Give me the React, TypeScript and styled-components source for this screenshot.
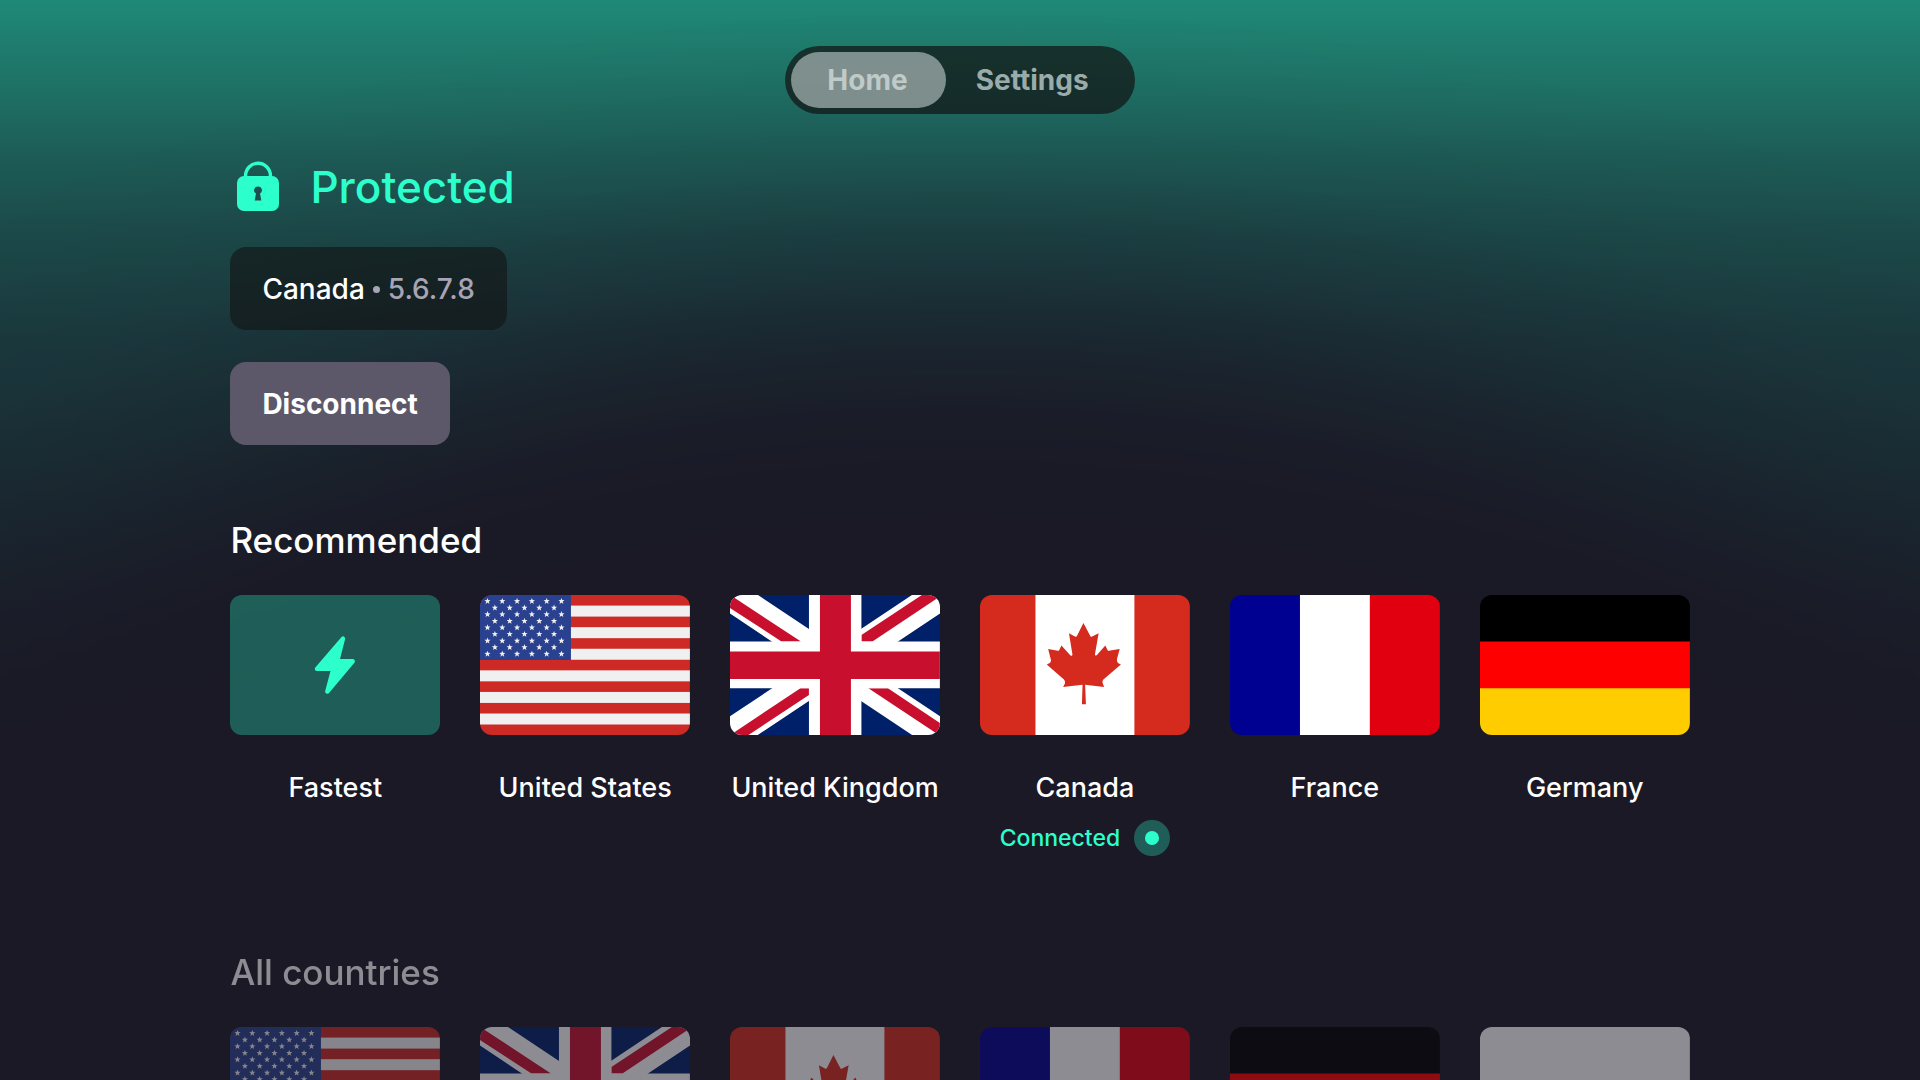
import React from "react";
import styled, { createGlobalStyle } from "styled-components";

const mint = "#2cffcc";
const ink = "#1b1926";

const GlobalStyle = createGlobalStyle`
  *, *::before, *::after { box-sizing: border-box; }
  html { scrollbar-width: none; background: ${ink}; }
  body {
    margin: 0;
    color: #fff;
    font-family: Inter, "Liberation Sans", sans-serif;
    font-size: 28px;
    line-height: 36px;
    font-weight: 500;
  }
  button { font: inherit; color: inherit; border: 0; padding: 0; background: none; cursor: pointer; }
  h1, h2, p, ul { margin: 0; padding: 0; font-weight: 500; }
`;

const Screen = styled.div`
  position: relative;
  isolation: isolate;
  &::before {
    content: "";
    position: absolute;
    inset: 0 0 auto;
    height: 100vh;
    z-index: -1;
    background: linear-gradient(
      to bottom,
      rgba(36, 255, 204, 0.49) 0%,
      rgba(36, 255, 204, 0.345) 11%,
      rgba(34, 255, 204, 0.285) 15%,
      rgba(30, 255, 204, 0.21) 22%,
      rgba(24, 255, 204, 0.15) 31%,
      rgba(10, 255, 204, 0.09) 45%,
      rgba(0, 255, 204, 0.045) 56%,
      rgba(0, 255, 204, 0) 70%
    );
    mask-image: radial-gradient(
      ellipse 86% 100% at 50% 100%,
      transparent 50%,
      rgba(0, 0, 0, 0.16) 62%,
      rgba(0, 0, 0, 0.34) 67%,
      rgba(0, 0, 0, 0.69) 76%,
      rgba(0, 0, 0, 0.9) 85%,
      rgba(0, 0, 0, 0.95) 90%,
      #000 100%
    );
  }
`;

const Main = styled.main`
  padding: 46px 12% 0;
`;

const Tabs = styled.nav`
  display: flex;
  width: fit-content;
  margin: 0 auto;
  padding: 6px;
  border-radius: 34px;
  background: rgba(19, 19, 19, 0.7);
`;

const Tab = styled.button<{ $active?: boolean }>`
  height: 56px;
  padding: 0 ${(p) => (p.$active ? 38 : 40)}px 0 ${(p) => (p.$active ? 36 : 30)}px;
  border-radius: 28px;
  font-weight: 700;
  color: ${(p) => (p.$active ? "#bfcac9" : "#9aacaa")};
  background: ${(p) => (p.$active ? "rgba(230, 240, 240, 0.5)" : "transparent")};
`;

const Status = styled.h1`
  display: flex;
  align-items: center;
  gap: 24px;
  margin-top: 40px;
  font-size: 44px;
  line-height: 66px;
  color: ${mint};
`;

const LockIcon = styled.svg`
  width: 56px;
  height: 56px;
`;

const Panel = styled.p`
  display: flex;
  align-items: center;
  gap: 8px;
  width: fit-content;
  margin-top: 27px;
  padding: 24px 32px 23px;
  border-radius: 16px;
  background: rgba(19, 19, 19, 0.6);
`;

const Address = styled.span`
  color: #a7a4b5;
`;

const Dot = styled.span`
  width: 7px;
  height: 7px;
  border-radius: 50%;
  background: #a7a4b5;
`;

const Disconnect = styled.button`
  display: block;
  height: 83px;
  margin-top: 32px;
  padding: 0 32px;
  border-radius: 16px;
  font-weight: 700;
  background: #5c586a;
`;

const Section = styled.section<{ $dimmed?: boolean }>`
  margin-top: ${(p) => (p.$dimmed ? 92 : 71)}px;
  opacity: ${(p) => (p.$dimmed ? 0.5 : 1)};
`;

const SectionTitle = styled.h2`
  font-size: 35px;
  line-height: 48px;
`;

const Grid = styled.ul`
  display: grid;
  grid-template-columns: repeat(6, minmax(0, 1fr));
  gap: 40px;
  margin-top: 31px;
  list-style: none;
`;

const Card = styled.button`
  display: flex;
  flex-direction: column;
  align-items: center;
  width: 100%;
  white-space: nowrap;
`;

const Thumb = styled.span<{ $tinted?: boolean }>`
  display: grid;
  place-items: center;
  width: 100%;
  aspect-ratio: 3 / 2;
  border-radius: 12px;
  overflow: hidden;
  background: ${(p) => (p.$tinted ? "rgba(44, 255, 204, 0.3)" : "transparent")};
`;

const FlagArt = styled.svg`
  display: block;
  width: 100%;
  height: 100%;
`;

const BoltIcon = styled.svg`
  width: 42px;
  height: 58px;
`;

const Name = styled.span`
  margin-top: 35px;
  font-size: 27px;
`;

const Connected = styled.span`
  display: flex;
  align-items: center;
  gap: 14px;
  height: 36px;
  margin-top: 14px;
  font-size: 23px;
  color: ${mint};
`;

const Pulse = styled.span`
  width: 36px;
  height: 36px;
  border-radius: 50%;
  border: 11px solid #215d58;
  background: ${mint};
`;

const StarField = () => {
  const stars: React.ReactElement[] = [];
  for (let row = 0; row < 9; row++) {
    const count = row % 2 ? 5 : 6;
    for (let col = 0; col < count; col++) {
      const x = 7.5 + col * 14.8 + (row % 2 ? 7.4 : 0);
      const y = 6.2 + row * 6.6;
      stars.push(
        <path
          key={`${row}-${col}`}
          transform={`translate(${x} ${y})`}
          d="M0-3.3 .8-1.1 3.1-1 1.3.4 1.9 2.7 0 1.4-1.9 2.7-1.3.4-3.1-1-.8-1.1Z"
          fill="#f0f0f0"
        />
      );
    }
  }
  return <>{stars}</>;
};

const UnitedStates = () => (
  <FlagArt viewBox="0 0 210 140" preserveAspectRatio="none" aria-hidden="true">
    <path fill="#cd2a26" d="M0 0h210v140H0z" />
    {[0, 1, 2, 3, 4, 5].map((i) => (
      <rect key={i} y={10.6 + i * 21.6} width="210" height="11" fill="#f0f0f0" />
    ))}
    <path fill="#2a418f" d="M0 0h91v65H0z" />
    <StarField />
  </FlagArt>
);

const UnitedKingdom = () => (
  <FlagArt viewBox="0 0 210 140" preserveAspectRatio="none" aria-hidden="true">
    <path fill="#002169" d="M0 0h210v140H0z" />
    <path stroke="#fff" strokeWidth="31" d="M0 0l210 140M210 0L0 140" />
    <path
      fill="#c8102e"
      d="M0 2.500V13L51.500 46.500H71L4 2.500ZM131.500 46.500V40L192 0H207V3.500L142.500 46.500ZM79 93.300V100L18.500 140H4V137.500L70.500 93.300ZM138.500 93.300H158L210 128V138H206Z"
    />
    <path fill="#fff" d="M79 0h52.500v140H79zM0 46.500h210v46.800H0z" />
    <path fill="#c8102e" d="M90 0h31v140H90zM0 56.500h210v27.500H0z" />
  </FlagArt>
);

const Canada = () => (
  <FlagArt viewBox="0 0 210 140" preserveAspectRatio="none" aria-hidden="true">
    <path fill="#d52b1e" d="M0 0h210v140H0z" />
    <path fill="#fff" d="M55.500 0h99v140h-99z" />
    <path
      fill="#d52b1e"
      d="M103.500 28 110.500 41.300Q111 42.200 112.200 41.600L118.700 38.300 115 59.500Q115.200 61.500 117 60L125.400 50.600 127.700 55.300Q128.200 56 129 55.900L139.800 54 137.200 63.500C136.800 65.500 137 67 138.500 68.200L141 69.500 123.500 84.500Q122 86 122.700 88L124.200 92 105.200 89.800 106 109.200H102L102.600 89.800 83.200 92 85 88.500Q85.500 86 84 84.500L66.800 69.500 69.800 68Q71.200 67 71 65L68.200 54 78 55.900Q79 55.900 79.300 55L81.500 50.500 90.300 60.200Q92.400 61.700 92.500 59.500L89 38.200 95 41.600Q96.400 42.200 97 41Z"
    />
  </FlagArt>
);

const France = () => (
  <FlagArt viewBox="0 0 210 140" preserveAspectRatio="none" aria-hidden="true">
    <path fill="#000091" d="M0 0h70v140H0z" />
    <path fill="#fff" d="M70 0h70v140H70z" />
    <path fill="#e1000f" d="M140 0h70v140h-70z" />
  </FlagArt>
);

const Germany = () => (
  <FlagArt viewBox="0 0 210 140" preserveAspectRatio="none" aria-hidden="true">
    <path d="M0 0h210v47H0z" />
    <path fill="#f00" d="M0 46.500h210V94H0z" />
    <path fill="#fc0" d="M0 93.300h210V140H0z" />
  </FlagArt>
);

const White = () => (
  <FlagArt viewBox="0 0 210 140" preserveAspectRatio="none" aria-hidden="true">
    <path fill="#fff" d="M0 0h210v140H0z" />
  </FlagArt>
);

const Bolt = () => (
  <BoltIcon viewBox="0 0 42 58" aria-hidden="true">
    <path
      fill={mint}
      d="M27.300 1.200 1.300 31.600C.2 33 1 35 3 35H16.500L11.200 55C10.700 57.500 13.300 58.800 15 57L40.400 26.800C41.600 25.200 40.700 23 38.700 23H26L31 3.500C31.500 .6 29-.7 27.300 1.200Z"
    />
  </BoltIcon>
);

const Lock = () => (
  <LockIcon viewBox="0 0 56 56" aria-hidden="true">
    <path d="M15.500 19V17a12.500 12.800 0 0 1 25 0v2" fill="none" stroke={mint} strokeWidth="3.400" />
    <path
      fill={mint}
      fillRule="evenodd"
      d="M14 17h28a7 7 0 0 1 7 7v21a7 7 0 0 1-7 7H14a7 7 0 0 1-7-7V24a7 7 0 0 1 7-7ZM28 27.500a3.800 3.800 0 0 0-2 7.100L24.700 41.500h6.600L30 34.600a3.800 3.800 0 0 0-2-7.100Z"
    />
  </LockIcon>
);

const recommended = [
  { name: "United States", Flag: UnitedStates },
  { name: "United Kingdom", Flag: UnitedKingdom },
  { name: "Canada", Flag: Canada, connected: true },
  { name: "France", Flag: France },
  { name: "Germany", Flag: Germany },
];

const allCountries = [UnitedStates, UnitedKingdom, Canada, France, Germany, White];

export default function App() {
  return (
    <Screen>
      <GlobalStyle />
      <Main>
        <Tabs>
          <Tab $active>Home</Tab>
          <Tab>Settings</Tab>
        </Tabs>
        <Status>
          <Lock />
          Protected
        </Status>
        <Panel>
          <span>Canada</span>
          <Dot />
          <Address>5.6.7.8</Address>
        </Panel>
        <Disconnect>Disconnect</Disconnect>
        <Section>
          <SectionTitle>Recommended</SectionTitle>
          <Grid>
            <li>
              <Card>
                <Thumb $tinted>
                  <Bolt />
                </Thumb>
                <Name>Fastest</Name>
              </Card>
            </li>
            {recommended.map(({ name, Flag, connected }) => (
              <li key={name}>
                <Card>
                  <Thumb>
                    <Flag />
                  </Thumb>
                  <Name>{name}</Name>
                  {connected && (
                    <Connected>
                      Connected
                      <Pulse />
                    </Connected>
                  )}
                </Card>
              </li>
            ))}
          </Grid>
        </Section>
        <Section $dimmed>
          <SectionTitle>All countries</SectionTitle>
          <Grid>
            {allCountries.map((Flag, i) => (
              <li key={i}>
                <Card>
                  <Thumb>
                    <Flag />
                  </Thumb>
                </Card>
              </li>
            ))}
          </Grid>
        </Section>
      </Main>
    </Screen>
  );
}
